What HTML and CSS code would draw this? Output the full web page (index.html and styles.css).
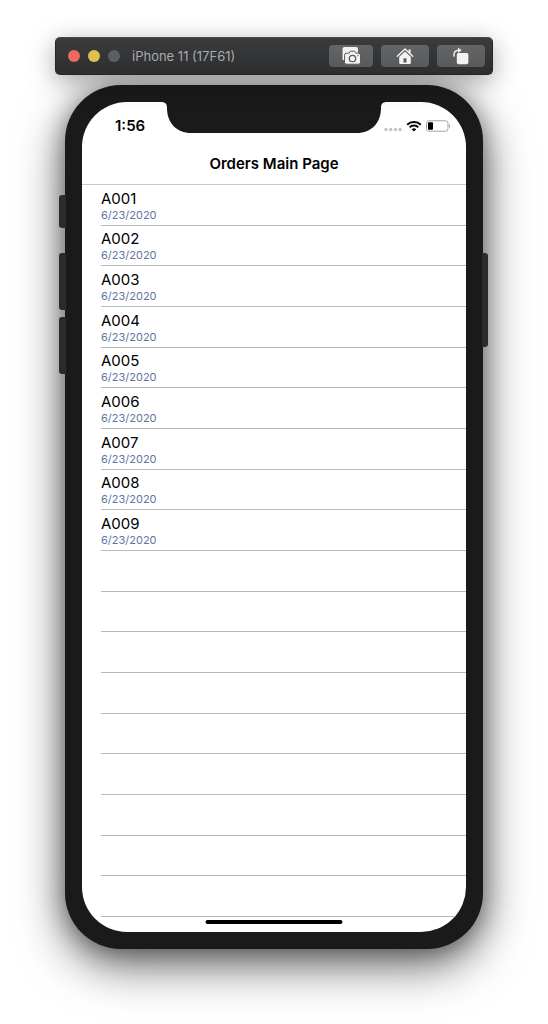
FILE: index.html
```html
<!DOCTYPE html>
<html lang="en">
<head>
    <meta charset="UTF-8">
    <meta name="viewport" content="width=device-width, initial-scale=1">
    <title>Orders Main Page</title>
    <link rel="stylesheet" href="styles.css">
</head>
<body>
    <header class="toolbar">
        <span class="light red"></span>
        <span class="light yellow"></span>
        <span class="light grey"></span>
        <span class="device-name">iPhone 11 (17F61)</span>
        <button class="tool small" type="button" aria-label="Screenshot">
            <svg width="20" height="20" viewBox="0 0 20 20">
                <rect x="1.5" y="1" width="15.500" height="13.500" rx="2" fill="#f2f2f3"/>
                <path d="M5.500 7.200h2.600l1.300-2h4.400l1.300 2h2.400a2 2 0 0 1 2 2v7a2 2 0 0 1-2 2h-12a2 2 0 0 1-2-2v-7a2 2 0 0 1 2-2z" fill="#f2f2f3" stroke="#5b5c5e" stroke-width="1"/>
                <circle cx="11.500" cy="12.500" r="3.200" fill="none" stroke="#5b5c5e" stroke-width="1.300"/>
                <circle cx="17" cy="9.700" r=".6" fill="#5b5c5e"/>
            </svg>
        </button>
        <button class="tool" type="button" aria-label="Home">
            <svg width="18" height="18" viewBox="0 0 18 18">
                <path d="M3.200 9.800 9 4.400l5.800 5.400V16a1 1 0 0 1-1 1H4.200a1 1 0 0 1-1-1z" fill="#f2f2f3"/>
                <path d="M1.300 9.200 9 2l7.700 7.200" fill="none" stroke="#5b5c5e" stroke-width="3" stroke-linecap="round"/>
                <path d="M1.300 9.200 9 2l7.700 7.200" fill="none" stroke="#f2f2f3" stroke-width="1.500" stroke-linecap="round"/>
                <path d="M12.500 2.500h2.200v4.600l-2.200-2.100z" fill="#f2f2f3"/>
                <path d="M7.500 15.500v-4.200h3v4.200z" fill="#5b5c5e"/>
            </svg>
        </button>
        <button class="tool" type="button" aria-label="Rotate">
            <svg width="18" height="18" viewBox="0 0 18 18">
                <rect x="4.800" y="6" width="11.600" height="11.300" rx="1.800" fill="#f2f2f3"/>
                <path d="M2 9C1.500 5.400 3.400 3.200 6.600 3.200" fill="none" stroke="#f2f2f3" stroke-width="1.500" stroke-linecap="round"/>
                <path d="M6 .400 9.600 3.200 6 6z" fill="#f2f2f3"/>
            </svg>
        </button>
    </header>

    <div class="phone">
        <span class="side mute"></span>
        <span class="side volume-up"></span>
        <span class="side volume-down"></span>
        <span class="side power"></span>

        <main class="screen">
            <svg class="notch" width="226" height="31" viewBox="0 0 226 31">
                <path d="M0 0H226C221.500 0 220 2 220 6C220 21 210 31 196 31H30C16 31 6 21 6 6C6 2 4.500 0 0 0z" fill="#1a1a1a"/>
            </svg>
            <div class="status">
                <span class="time">1:56</span>
                <svg class="signal" width="18" height="12" viewBox="0 0 18 12" fill="#c4c4c4">
                    <circle cx="2" cy="9.500" r="1.700"/>
                    <circle cx="6.700" cy="9.500" r="1.700"/>
                    <circle cx="11.400" cy="9.500" r="1.700"/>
                    <circle cx="16.100" cy="9.500" r="1.700"/>
                </svg>
                <svg class="wifi" width="16" height="12" viewBox="0 0 16 12">
                    <path d="M1.200 4.700a9.700 9.700 0 0 1 13.600 0M3.700 7.200a6.200 6.200 0 0 1 8.600 0" fill="none" stroke="#000" stroke-width="2"/>
                    <path d="M8 11.400 5.700 9.200a3.400 3.400 0 0 1 4.600 0z" fill="#000"/>
                </svg>
                <svg class="battery" width="25" height="12" viewBox="0 0 25 12">
                    <rect x=".5" y=".8" width="21.500" height="10.400" rx="2.500" fill="none" stroke="#a3a3a3"/>
                    <path d="M23 4.200c1.600.4 1.600 3.200 0 3.600z" fill="#a3a3a3"/>
                    <rect x="2" y="2.300" width="5" height="7.400" rx="1" fill="#000"/>
                </svg>
            </div>
            <h1 class="title">Orders Main Page</h1>
            <ul class="orders">
                <li><span class="order">A001</span><span class="date">6/23/2020</span></li>
                <li><span class="order">A002</span><span class="date">6/23/2020</span></li>
                <li><span class="order">A003</span><span class="date">6/23/2020</span></li>
                <li><span class="order">A004</span><span class="date">6/23/2020</span></li>
                <li><span class="order">A005</span><span class="date">6/23/2020</span></li>
                <li><span class="order">A006</span><span class="date">6/23/2020</span></li>
                <li><span class="order">A007</span><span class="date">6/23/2020</span></li>
                <li><span class="order">A008</span><span class="date">6/23/2020</span></li>
                <li><span class="order">A009</span><span class="date">6/23/2020</span></li>
                <li></li>
                <li></li>
                <li></li>
                <li></li>
                <li></li>
                <li></li>
                <li></li>
                <li></li>
                <li></li>
            </ul>
            <span class="home-bar"></span>
        </main>
    </div>
</body>
</html>
```

FILE: styles.css
```css
* {
    box-sizing: border-box;
}
body {
    display: flex;
    flex-direction: column;
    gap: 10px;
    min-height: 100vh;
    margin: 0;
    padding: 37px 55px 75px;
    background: #fff;
    color: #000;
    font-family: Inter, "Liberation Sans", sans-serif;
}

/* simulator toolbar */
.toolbar {
    position: relative;
    z-index: 1;
    display: flex;
    align-items: center;
    gap: 8px;
    height: 38px;
    padding: 0 7px 0 12px;
    border: 1px solid #242526;
    border-top-color: #48494b;
    border-radius: 5px;
    background: linear-gradient(#3a3b3d, #2d2e30);
    box-shadow: 0 6px 26px rgba(0,0,0,0.35);
}
.light {
    width: 12px;
    height: 12px;
    border-radius: 50%;
}
.red {
    background: #ec6a5e;
}
.yellow {
    background: #e0c04c;
}
.grey {
    background: #5d5e60;
}
.device-name {
    flex: 1;
    margin-left: 4px;
    color: #a9aaab;
    font-size: 13px;
    white-space: nowrap;
}
.tool {
    display: flex;
    align-items: center;
    justify-content: center;
    width: 48px;
    height: 22px;
    padding: 0;
    border: none;
    border-radius: 4px;
    background: linear-gradient(#646567, #58595b);
}
.small {
    width: 44px;
}

/* phone body */
.phone {
    position: relative;
    display: flex;
    flex: 1;
    margin: 0 10px;
    padding: 17px;
    border-radius: 56px;
    background: #1a1a1a;
    box-shadow: 0 16px 48px rgba(0,0,0,0.6), 0 2px 24px rgba(0,0,0,0.35);
}
.side {
    position: absolute;
    left: -6px;
    width: 7px;
    height: 57px;
    border-radius: 3px 0 0 3px;
    background: #2b2b2b;
}
.mute {
    top: 110px;
    height: 33px;
}
.volume-up {
    top: 168px;
}
.volume-down {
    top: 232px;
}
.power {
    top: 168px;
    right: -5px;
    left: auto;
    width: 6px;
    height: 94px;
    border-radius: 0 3px 3px 0;
}

/* screen */
.screen {
    position: relative;
    display: flex;
    flex: 1;
    flex-direction: column;
    overflow: hidden;
    padding-bottom: 15px;
    border-radius: 45px;
    background: #fff;
}
.notch {
    position: absolute;
    top: 0;
    left: 50%;
    transform: translateX(-50%);
}
.status {
    display: flex;
    align-items: center;
    height: 43px;
    padding: 4px 15px 0 33px;
}
.time {
    flex: 1;
    font-size: 15px;
    font-weight: 600;
}
.wifi {
    margin: 0 4px;
}
.title {
    height: 40px;
    margin: 0;
    border-bottom: 1px solid #c8c8c8;
    font-size: 15px;
    font-weight: 600;
    line-height: 38px;
    text-align: center;
}
.orders {
    display: grid;
    flex: 1;
    grid-auto-rows: 1fr;
    margin: 0;
    padding: 0 0 0 19px;
    list-style: none;
}
.orders li {
    display: flex;
    flex-direction: column;
    justify-content: flex-end;
    padding-bottom: 3px;
    border-bottom: 1px solid #b9babb;
}
.order {
    font-size: 15px;
    line-height: 18px;
}
.date {
    color: #5f74a3;
    font-size: 11px;
    line-height: 14px;
}
.home-bar {
    position: absolute;
    bottom: 8px;
    left: 50%;
    width: 137px;
    height: 4px;
    border-radius: 2px;
    background: #000;
    transform: translateX(-50%);
}
```
